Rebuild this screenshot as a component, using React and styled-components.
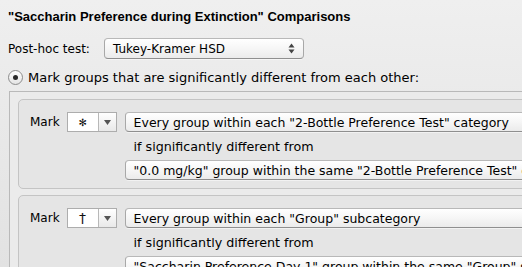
import React from "react";
import styled, { createGlobalStyle } from "styled-components";

const Global = createGlobalStyle`
  html, body { margin: 0; padding: 0; }
  body {
    width: 522px; height: 267px; overflow: hidden;
    background: linear-gradient(180deg, #efefef 0%, #e2e2e2 100%);
    font-family: "DejaVu Sans", "Liberation Sans", sans-serif;
    font-size: 12px; color: #000;
  }
`;

const Page = styled.div`
  padding: 9px 0 0 8px;
  display: flex; flex-direction: column;
`;

const Title = styled.div`
  font-family: "Liberation Sans", Arial, sans-serif;
  font-weight: bold; font-size: 13px; line-height: 16px;
  white-space: nowrap;
`;

const Row = styled.div`
  display: flex; align-items: center; gap: ${p => p.$gap || 8}px;
  margin-top: ${p => p.$mt || 0}px;
  white-space: nowrap;
`;

const Label = styled.span`
  font-size: ${p => p.$fs || 12}px;
`;

const Popup = styled.div`
  box-sizing: border-box;
  height: ${p => p.$h || 20}px;
  width: ${p => p.$w}px;
  flex: none;
  display: flex; align-items: center; justify-content: space-between;
  padding: 0 8px 0 ${p => p.$pl || 8}px;
  font-size: ${p => p.$fs || 12}px;
  border: 1px solid #a8a8a8;
  border-top-color: #b8b8b8;
  border-bottom-color: #8f8f8f;
  border-radius: 4px;
  background: linear-gradient(180deg, #ffffff 0%, #f6f6f6 50%, #ebebeb 100%);
  box-shadow: 0 1px 0 rgba(255,255,255,0.5);
  white-space: nowrap; overflow: hidden;
`;

const Arrows = styled.svg`
  flex: none;
`;

const Radio = styled.div`
  box-sizing: border-box;
  width: 15px; height: 15px; border-radius: 50%;
  border: 1px solid #8c8c8c;
  background: linear-gradient(180deg, #ffffff, #e4e4e4);
  display: flex; align-items: center; justify-content: center;
  flex: none;
  &::after {
    content: ""; width: 5px; height: 5px; border-radius: 50%; background: #2a2a2a;
  }
`;

const Scroll = styled.div`
  margin: 6px 0 0 1px;
  border-top: 1px solid #b9b9b9;
  border-left: 1px solid #b9b9b9;
  background: #ebebeb;
  padding: 7px 0 0 8px;
  height: 200px;
  width: 700px;
  display: flex; flex-direction: column; gap: 6px;
`;

const GroupBox = styled.div`
  box-sizing: border-box;
  border: 1px solid #c4c4c4;
  border-radius: 5px;
  background: #e5e5e5;
  padding: 12px 0 8px 11px;
  display: flex; gap: 8px; align-items: flex-start;
`;

const MarkCol = styled.div`
  display: flex; align-items: center; gap: 7px; height: 20px;
`;

const MarkBox = styled.div`
  box-sizing: border-box;
  width: 50px; height: 20px;
  border: 1px solid #adadad;
  display: flex; background: #fff;
`;

const MarkSym = styled.div`
  flex: 1; display: flex; align-items: center; justify-content: center;
  font-size: ${p => p.$size || 12}px; color: #111;
`;

const MarkArrow = styled.div`
  width: 17px; border-left: 1px solid #b8b8b8;
  background: linear-gradient(180deg, #ffffff, #e9e9e9);
  display: flex; align-items: center; justify-content: center;
`;

const Stack = styled.div`
  display: flex; flex-direction: column;
`;

const Note = styled.div`
  height: 28px; display: flex; align-items: center; padding-left: 9px;
  font-size: 12.7px;
  white-space: nowrap;
`;

const UpDown = () => (
  <Arrows width="7" height="11" viewBox="0 0 7 11">
    <path d="M3.5 0.5 L6.5 4.5 L0.5 4.5 Z" fill="#444" />
    <path d="M3.5 10.5 L6.5 6.5 L0.5 6.5 Z" fill="#444" />
  </Arrows>
);

const Down = () => (
  <svg width="7" height="5" viewBox="0 0 7 5">
    <path d="M0 0 L7 0 L3.5 5 Z" fill="#555" />
  </svg>
);

const Group = ({ sym, size, first, second }) => (
  <GroupBox>
    <MarkCol>
      <span>Mark</span>
      <MarkBox>
        <MarkSym $size={size}>{sym}</MarkSym>
        <MarkArrow><Down /></MarkArrow>
      </MarkBox>
    </MarkCol>
    <Stack>
      <Popup $w={460} $fs={12.5}>{first}</Popup>
      <Note>if significantly different from</Note>
      <Popup $w={460} $fs={12.5}>{second}</Popup>
    </Stack>
  </GroupBox>
);

export default function App() {
  return (
    <Page>
      <Global />
      <Title>"Saccharin Preference during Extinction" Comparisons</Title>
      <Row $mt={13} $gap={14}>
        <Label>Post-hoc test:</Label>
        <Popup $w={200} $h={21} $pl={8}>
          <span>Tukey-Kramer HSD</span>
          <UpDown />
        </Popup>
      </Row>
      <Row $mt={11} $gap={5}>
        <Radio />
        <Label $fs={13}>Mark groups that are significantly different from each other:</Label>
      </Row>
      <Scroll>
        <Group
          sym="✻"
          size={10}
          first={'Every group within each "2-Bottle Preference Test" category'}
          second={'"0.0 mg/kg" group within the same "2-Bottle Preference Test" category'}
        />
        <Group
          sym="†"
          size={14}
          first={'Every group within each "Group" subcategory'}
          second={'"Saccharin Preference Day 1" group within the same "Group" subcategory'}
        />
      </Scroll>
    </Page>
  );
}
